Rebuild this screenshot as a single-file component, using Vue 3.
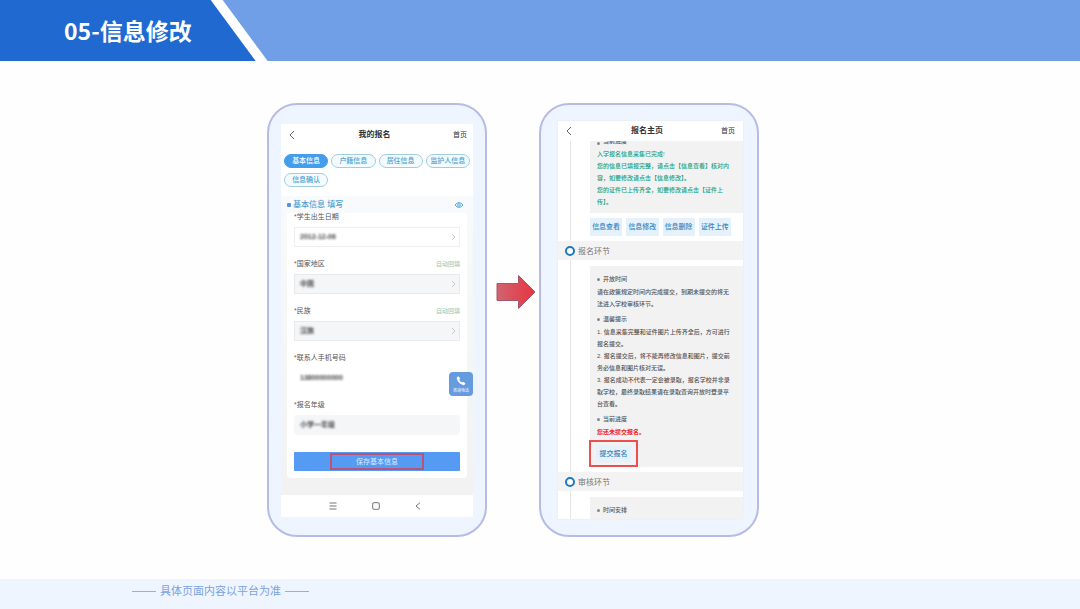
<script setup>
import { ref } from 'vue'

const tabs = ['基本信息', '户籍信息', '居住信息', '监护人信息', '信息确认']
const activeTab = ref(0)

const fields = ref([
  { id: 'birth', label: '学生出生日期', value: '2012-12-06', kind: 'outlined', arrow: true },
  { id: 'region', label: '国家地区', value: '中国', kind: 'filled', arrow: true, auto: true },
  { id: 'nation', label: '民族', value: '汉族', kind: 'filled', arrow: true, auto: true },
  { id: 'phone', label: '联系人手机号码', value: '13800000000', kind: 'plain' },
  { id: 'grade', label: '报名年级', value: '小学一年级', kind: 'soft' },
])

const doneLines = [
  '入学报名信息采集已完成!',
  '您的信息已填报完整，请点击【信息查看】核对内',
  '容，如要修改请点击【信息修改】。',
  '您的证件已上传齐全，如要修改请点击【证件上',
  '传】。',
]
const actions = ['信息查看', '信息修改', '信息删除', '证件上传']
const openLines = ['请在政策规定时间内完成提交，到期未提交的将无', '法进入学校审核环节。']
const tipLines = [
  '1. 信息采集完整和证件图片上传齐全后，方可进行',
  '报名提交。',
  '2. 报名提交后，将不能再修改信息和图片，提交前',
  '务必信息和图片核对无误。',
  '3. 报名成功不代表一定会被录取，报名学校并非录',
  '取学校，最终录取结果请在录取查询开放时登录平',
  '台查看。',
]
</script>

<template>
  <div class="page">
    <header class="banner">
      <div class="banner-edge">
        <h1 class="banner-title">05-信息修改</h1>
      </div>
    </header>

    <main class="stage">
      <section class="phone phone-form">
        <div class="screen">
          <div class="topbar">
            <button class="icon-btn" type="button" aria-label="返回">
              <svg width="6" height="10" viewBox="0 0 6 10"><path d="M5 1 1 5l4 4" fill="none" stroke="#666" stroke-width="1" /></svg>
            </button>
            <h2>我的报名</h2>
            <a href="#">首页</a>
          </div>
          <nav class="tabs">
            <button
              v-for="(tab, i) in tabs"
              :key="tab"
              type="button"
              :class="{ active: i === activeTab }"
              @click="activeTab = i"
            >{{ tab }}</button>
          </nav>
          <div class="form-area">
            <div class="form-head">
              <span class="square"></span>
              <h3>基本信息 填写</h3>
              <svg width="10" height="8" viewBox="0 0 10 8"><path d="M1 4Q5-.8 9 4 5 8.8 1 4Z" fill="none" stroke="#5aa9dc" stroke-width="1" /><circle cx="5" cy="4" r="1.3" fill="none" stroke="#5aa9dc" stroke-width="1" /></svg>
            </div>
            <form class="card" @submit.prevent>
              <div v-for="f in fields" :key="f.id" class="field">
                <div class="field-label">
                  <label :for="f.id"><i>*</i>{{ f.label }}</label>
                  <span v-if="f.auto">自动回填</span>
                </div>
                <div class="control" :class="f.kind">
                  <input :id="f.id" v-model="f.value" type="text" />
                  <svg v-if="f.arrow" width="5" height="8" viewBox="0 0 5 8"><path d="m1 1 3 3-3 3" fill="none" stroke="#c4c7cb" stroke-width="1" /></svg>
                </div>
              </div>
              <button class="save" type="submit"><span>保存基本信息</span></button>
            </form>
          </div>
          <div class="system-bar">
            <svg width="8" height="8" viewBox="0 0 8 8"><path d="M.5 1h7M.5 4h7M.5 7h7" stroke="#777" stroke-width="1" /></svg>
            <svg width="8" height="8" viewBox="0 0 8 8"><rect x=".7" y=".7" width="6.6" height="6.6" rx="1.3" fill="none" stroke="#777" stroke-width="1" /></svg>
            <svg width="6" height="8" viewBox="0 0 6 8"><path d="M5 .7 1 4l4 3.3" fill="none" stroke="#777" stroke-width="1" /></svg>
          </div>
          <button class="hotline" type="button">
            <svg width="10" height="10" viewBox="0 0 10 10"><path d="M1.1 1.2 2.2.5Q2.7.3 3 .8l1 1.7q.2.4-.2.7l-.6.5q.9 1.9 2.8 2.9l.6-.6q.3-.3.7-.1l1.8 1q.4.3.2.7l-.7 1.2q-.4.6-1.5.3Q2 7.500.7 2.600.500 1.700 1.100 1.200Z" fill="#fff" /></svg>
            <span>咨询电话</span>
          </button>
        </div>
      </section>

      <svg class="arrow" width="40" height="36" viewBox="0 0 40 36">
        <defs>
          <linearGradient id="arrow-fill"><stop offset="0" stop-color="#d0646f" /><stop offset="1" stop-color="#e83440" /></linearGradient>
        </defs>
        <path d="M1 9.500H22.500V1.500L39 18 22.500 34.500V26.500H1Z" fill="url(#arrow-fill)" stroke="#a6566f" stroke-width="1" />
      </svg>

      <section class="phone phone-home">
        <div class="screen">
          <div class="topbar">
            <button class="icon-btn" type="button" aria-label="返回">
              <svg width="6" height="10" viewBox="0 0 6 10"><path d="M5 1 1 5l4 4" fill="none" stroke="#666" stroke-width="1" /></svg>
            </button>
            <h2>报名主页</h2>
            <a href="#">首页</a>
          </div>
          <div class="timeline">
            <div class="panel panel-done">
              <h4 class="cut">当前进度</h4>
              <p v-for="line in doneLines" :key="line">{{ line }}</p>
            </div>
            <div class="actions">
              <button v-for="a in actions" :key="a" type="button">{{ a }}</button>
            </div>
            <h3 class="step"><span class="ring"></span>报名环节</h3>
            <div class="panel panel-open">
              <h4>开放时间</h4>
              <p v-for="line in openLines" :key="line">{{ line }}</p>
              <h4>温馨提示</h4>
              <p v-for="line in tipLines" :key="line">{{ line }}</p>
              <h4>当前进度</h4>
              <p class="warning">您还未提交报名。</p>
              <div class="submit-frame"><button type="button">提交报名</button></div>
            </div>
            <h3 class="step"><span class="ring"></span>审核环节</h3>
            <div class="panel panel-next">
              <h4>时间安排</h4>
            </div>
          </div>
        </div>
      </section>
    </main>

    <footer class="footnote"><span></span><p>具体页面内容以平台为准</p><span></span></footer>
  </div>
</template>

<style>
body {
  margin: 0;
}
</style>

<style scoped>
* {
  box-sizing: border-box;
}
.page {
  min-height: 100vh;
  display: flex;
  flex-direction: column;
  background: #fefefe;
  font-family: "Liberation Sans", "Noto Sans CJK SC", sans-serif;
  color: #555;
}
h1, h2, h3, h4, p {
  margin: 0;
  font-weight: 400;
}
button {
  margin: 0;
  padding: 0;
  border: 0;
  background: none;
  font-family: inherit;
  cursor: pointer;
}
svg {
  display: block;
  flex: none;
}
a {
  color: #333;
  text-decoration: none;
}

.banner {
  display: flex;
  background: #709fe8;
}
.banner-edge {
  padding-right: 12px;
  background: #fff;
  clip-path: polygon(0 0, calc(100% - 45px) 0, 100% 100%, 0 100%);
}
.banner-title {
  padding: 0 64px;
  background: #2069d1;
  clip-path: polygon(0 0, calc(100% - 45px) 0, 100% 100%, 0 100%);
  color: #fff;
  font: 700 23px/61px "Noto Sans CJK SC", sans-serif;
}

.stage {
  flex: 1;
  display: flex;
  justify-content: center;
  align-items: flex-start;
  padding: 42px 54px 42px 0;
}
.phone {
  width: 220px;
  border: 2px solid #b6bce3;
  border-radius: 30px;
  background: #eff5fe;
}
.phone-form {
  padding: 19px 12px 18px;
}
.phone-home {
  padding: 16px 14px 16px 17px;
}
.arrow {
  align-self: center;
  margin: 0 3px 56px 9px;
}
.screen {
  position: relative;
  background: #fff;
}
.topbar {
  display: grid;
  grid-template-columns: 1fr auto 1fr;
  align-items: center;
  height: 21px;
  padding: 0 6px 0 8px;
}
.topbar h2 {
  padding-right: 7px;
  font-size: 8px;
  line-height: 12px;
  font-weight: 700;
  color: #333;
}
.topbar a {
  justify-self: end;
  font-size: 7px;
  line-height: 12px;
}
.icon-btn {
  justify-self: start;
}

.tabs {
  display: grid;
  grid-template-columns: repeat(4, 1fr);
  gap: 5px 3px;
  padding: 9px 3px 9px;
}
.tabs button {
  height: 14px;
  border: 1px solid #a0cde0;
  border-radius: 7px;
  background: #f3fbfe;
  color: #4ba3cf;
  font-size: 7px;
  font-weight: 500;
  line-height: 12px;
  white-space: nowrap;
}
.tabs .active {
  border-color: #439deb;
  background: #439deb;
  color: #fff;
}
.form-area {
  padding: 0 6px 17px;
  background: linear-gradient(#f8fafb, #f4f5f5 60%, #f2f2f2);
}
.form-head {
  display: flex;
  align-items: center;
  height: 17px;
  padding: 0 3px 0 0;
}
.form-head h3 {
  flex: 1;
  margin-left: 2px;
  color: #4c9fd3;
  font-size: 8px;
  font-weight: 500;
  line-height: 12px;
}
.square {
  width: 4px;
  height: 4px;
  border-radius: 1px;
  background: #5b90e4;
}
.card {
  padding: 0 7px 7px;
  border-radius: 0 0 4px 4px;
  background: #fff;
}
.field {
  margin-bottom: 13px;
}
.field-label {
  display: flex;
  justify-content: space-between;
  margin-bottom: 6px;
  font-size: 7px;
  line-height: 8px;
}
.field-label i {
  color: #b04848;
  font-style: normal;
}
.field-label span {
  color: #a2cbbb;
  font-size: 6px;
  font-weight: 500;
}
.control {
  display: flex;
  align-items: center;
  height: 20px;
  padding: 0 3px 0 5px;
  border: 1px solid transparent;
}
.outlined {
  border-color: #eeeff1;
}
.filled {
  border-color: #e9eaed;
  background: #f5f6f8;
}
.soft {
  border-radius: 4px;
  background: #f5f6f8;
}
.control input {
  flex: 1;
  min-width: 0;
  padding: 0;
  border: 0;
  outline: 0;
  background: none;
  color: #444;
  font-family: inherit;
  font-size: 7px;
  font-weight: 700;
  line-height: 12px;
  filter: blur(1px);
}
.save {
  display: flex;
  justify-content: center;
  align-items: center;
  width: 100%;
  height: 19px;
  margin-top: 17px;
  border-radius: 1px;
  background: #559af3;
}
.save span {
  width: 94px;
  border: 2px solid #bd5278;
  color: #dcecff;
  font-size: 7px;
  line-height: 13px;
}
.system-bar {
  display: flex;
  justify-content: center;
  align-items: center;
  gap: 35px;
  height: 22px;
  padding-right: 4px;
}
.hotline {
  position: absolute;
  right: 0;
  bottom: 121px;
  width: 24px;
  height: 24px;
  border-radius: 4px;
  background: #659cdf;
  color: #fff;
  display: flex;
  flex-direction: column;
  align-items: center;
  justify-content: center;
  gap: 2px;
}
.hotline span {
  font-size: 4px;
  line-height: 5px;
}

.phone-home .screen {
  box-shadow: 0 0 2px #e6e9ee;
}
.phone-home .topbar {
  height: 20px;
  padding-right: 8px;
}
.timeline {
  position: relative;
  background: linear-gradient(90deg, transparent 12px, #e6e6e8 12px, #e6e6e8 13px, transparent 13px);
}
.panel {
  margin-left: 32px;
  padding: 0 4px 0 7px;
  background: #f2f2f2;
  color: #555;
  font-size: 6px;
  font-weight: 500;
  line-height: 12px;
  white-space: nowrap;
}
.panel p,
.panel h4 {
  font-weight: 500;
}
.panel h4 {
  display: flex;
  align-items: center;
  gap: 3px;
  padding: 3px 0 1px;
  font-size: 6px;
  line-height: 12px;
}
.panel h4::before {
  content: "";
  width: 3px;
  height: 3px;
  border-radius: 50%;
  background: #888;
}
.panel-done {
  padding-bottom: 5px;
  color: #21a07a;
}
.panel .cut {
  height: 7px;
  padding: 0 0 3px;
  overflow: hidden;
  align-items: flex-end;
  line-height: 8px;
  color: #555;
}
.actions {
  display: flex;
  gap: 4px;
  padding: 5px 12px 5px 32px;
}
.actions button {
  flex: 1;
  height: 18px;
  background: #e5f2fc;
  color: #3585bd;
  font-size: 7px;
  font-weight: 500;
  line-height: 18px;
  white-space: nowrap;
}
.step {
  display: flex;
  align-items: center;
  gap: 3px;
  height: 19px;
  margin-bottom: 6px;
  padding-left: 7px;
  background: #f3f3f3;
  color: #777;
  font-size: 8px;
}
.ring {
  width: 10px;
  height: 10px;
  border: 2px solid #1c79bd;
  border-radius: 50%;
  background: #fff;
}
.panel-open {
  margin-bottom: 5px;
  padding-top: 4px;
}
.panel .warning {
  padding-bottom: 2px;
  color: #ee2525;
  font-weight: 700;
}
.submit-frame {
  display: inline-block;
  margin-left: -8px;
  padding: 3px 5px;
  border: 2px solid #ec4f4f;
  vertical-align: top;
}
.submit-frame button {
  display: block;
  width: 35px;
  height: 17px;
  background: #e5f2fc;
  color: #3585bd;
  font-size: 7px;
  font-weight: 500;
  line-height: 17px;
}
.panel-next {
  padding-top: 4px;
  padding-bottom: 2px;
}

.footnote {
  display: flex;
  align-items: center;
  gap: 4px;
  height: 30px;
  padding: 0 132px;
  padding-bottom: 6px;
  background: #eff5fe;
  color: #7ba3dd;
  font-size: 11px;
  line-height: 16px;
}
.footnote span {
  width: 24px;
  height: 1px;
  background: #8db1e4;
}
</style>
